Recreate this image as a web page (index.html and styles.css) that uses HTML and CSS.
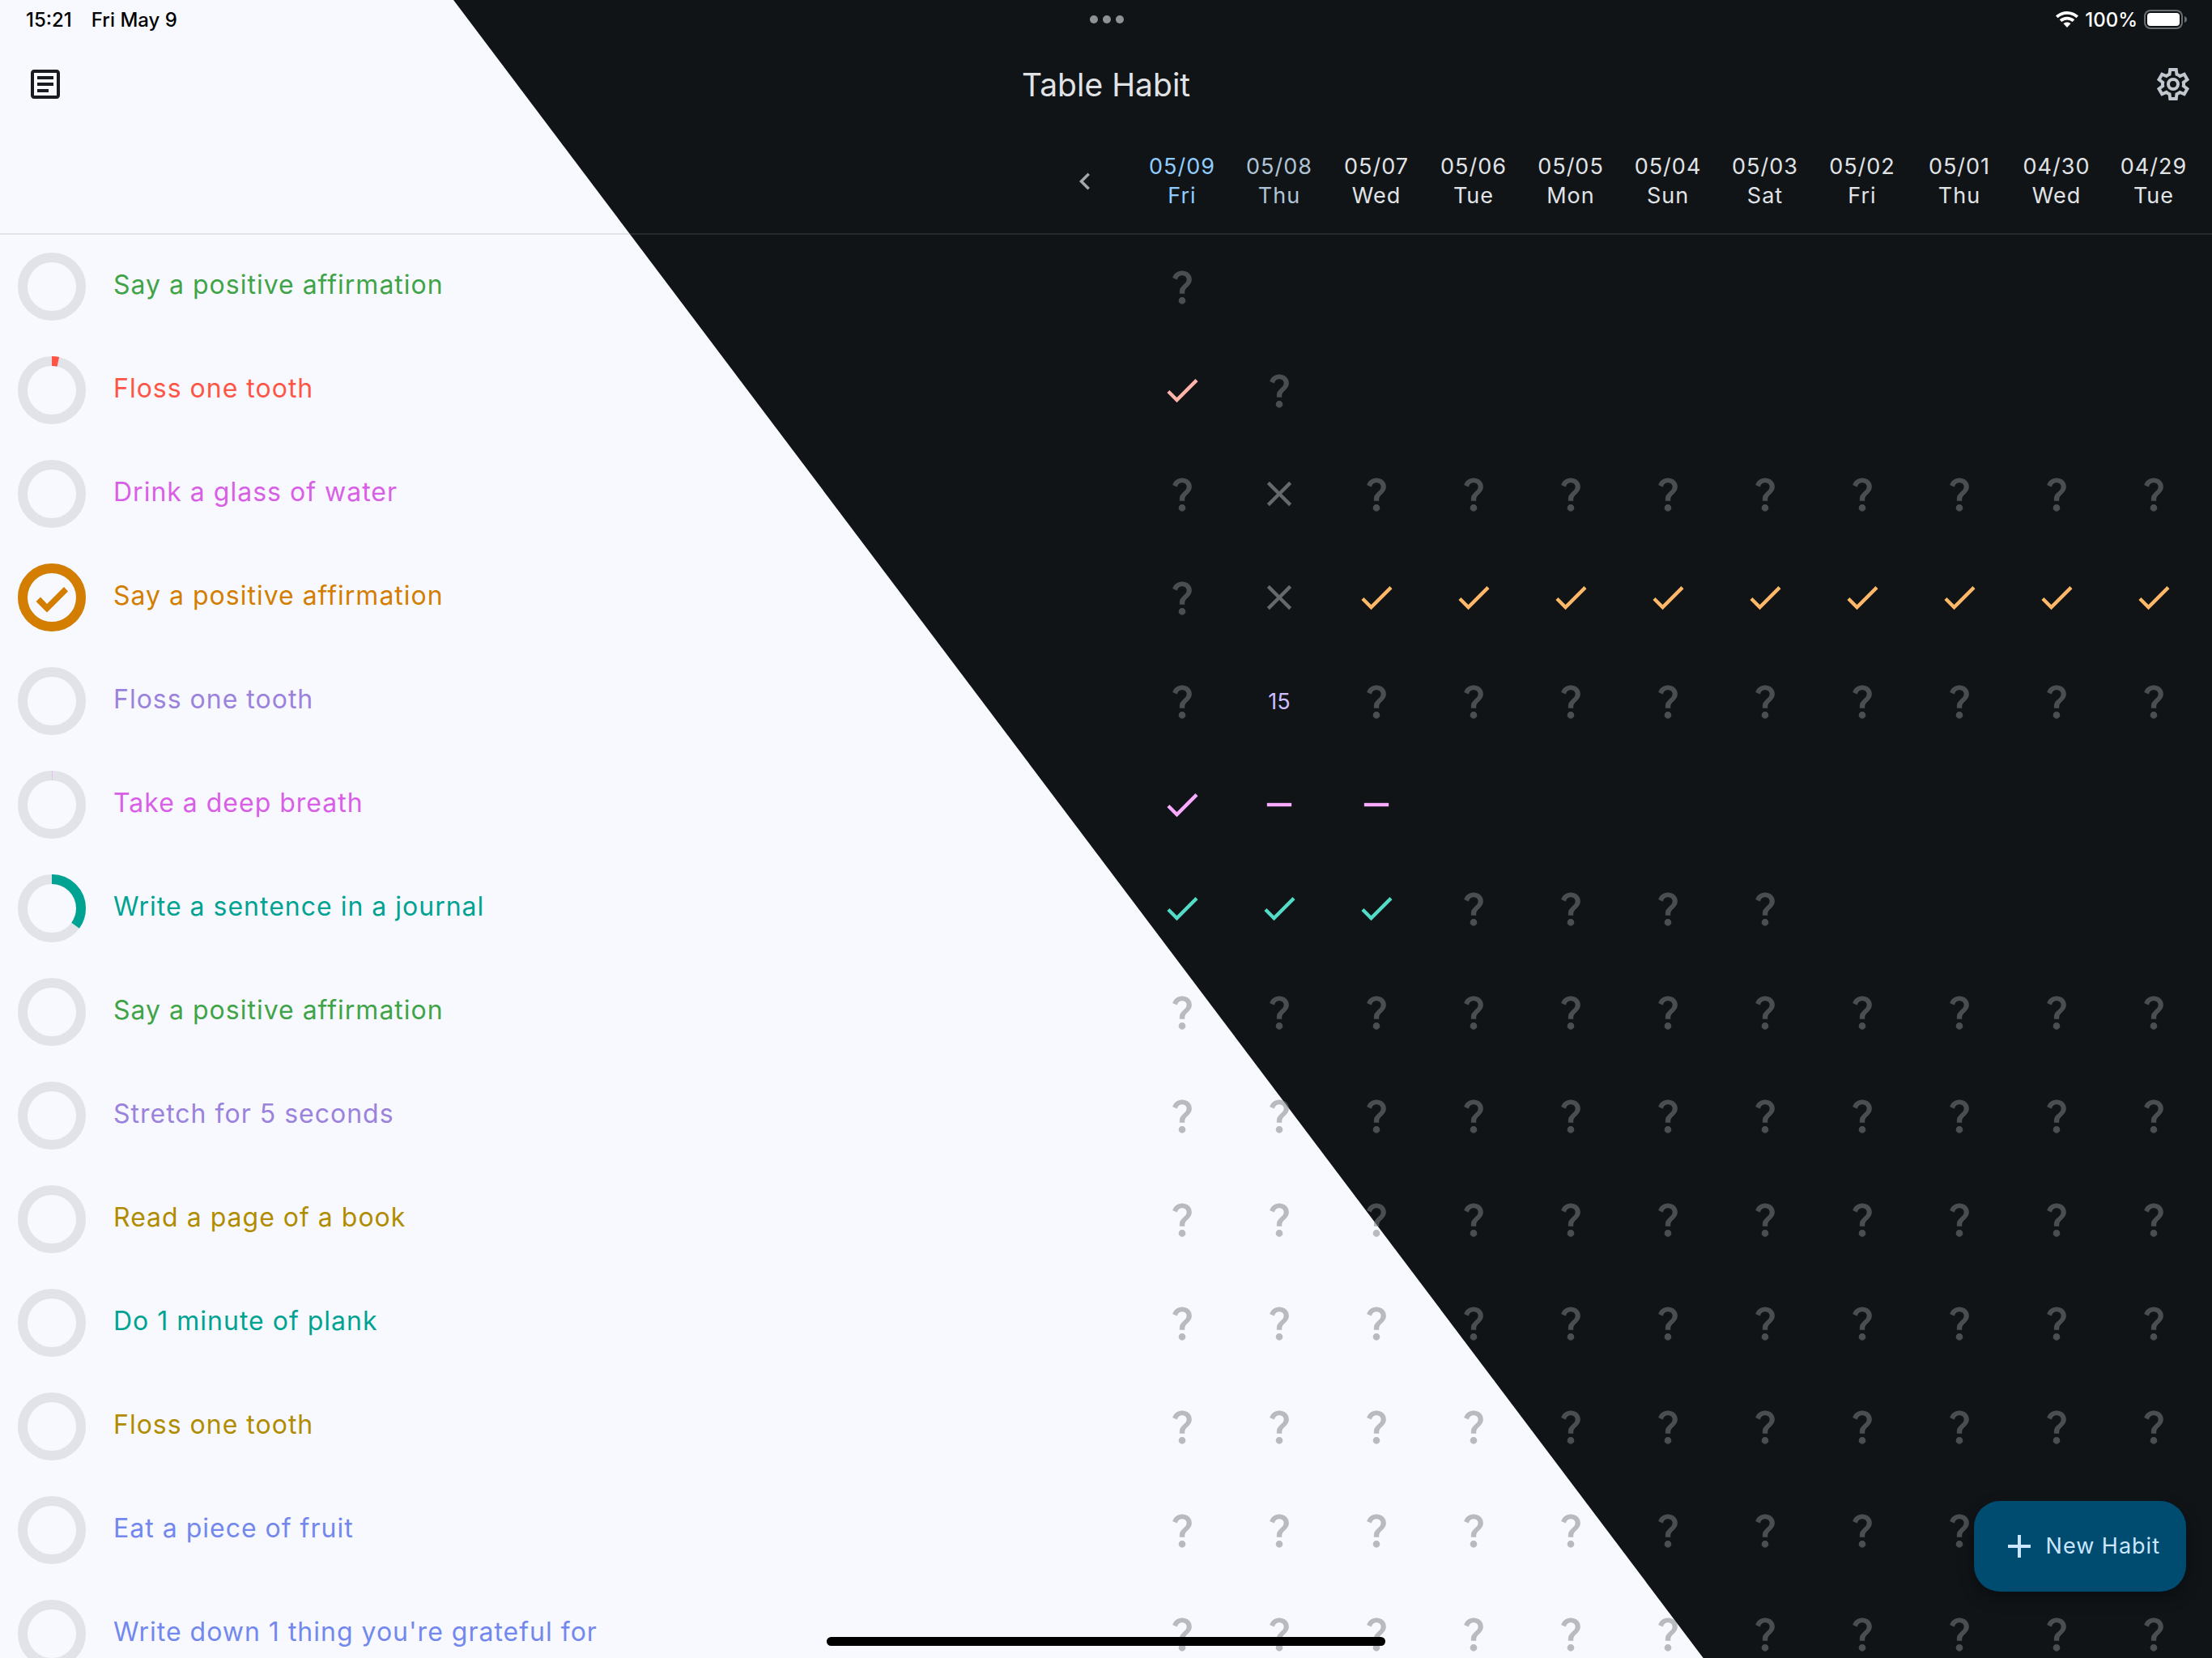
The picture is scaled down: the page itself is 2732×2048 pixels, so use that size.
FILE: index.html
```html
<!DOCTYPE html>
<html lang="en">
<head>
<meta charset="utf-8">
<meta name="viewport" content="width=device-width, initial-scale=1">
<title>Table Habit</title>
<link rel="stylesheet" href="styles.css">
</head>
<body>
<svg class="sprite" aria-hidden="true">
  <symbol id="ask" viewBox="0 0 24 24"><path d="M11.07 12.85c.77-1.39 2.25-2.21 3.11-3.44.91-1.29.4-3.7-2.18-3.7-1.69 0-2.52 1.28-2.87 2.34L6.54 6.96C7.25 4.83 9.18 3 11.99 3c2.35 0 3.96 1.07 4.78 2.41.7 1.15 1.11 3.3.03 4.9-1.2 1.77-2.35 2.31-2.97 3.45-.25.46-.35.76-.35 2.24h-2.89c-.01-.78-.13-2.05.48-3.15zM14 20c0 1.1-.9 2-2 2s-2-.9-2-2 .9-2 2-2 2 .9 2 2z"/></symbol>
  <symbol id="check" viewBox="0 0 24 24"><path d="M9 16.17 4.83 12l-1.42 1.41L9 19 21 7l-1.41-1.41z"/></symbol>
  <symbol id="cross" viewBox="0 0 24 24"><path d="M19 6.41 17.59 5 12 10.59 6.41 5 5 6.41 10.59 12 5 17.59 6.41 19 12 13.41 17.59 19 19 17.59 13.41 12z"/></symbol>
  <symbol id="dash" viewBox="0 0 24 24"><path d="M19 13H5v-2h14z"/></symbol>
</svg>

<div class="app">
  <div class="daylight"></div>

  <div class="status">
    <div class="status-left"><span>15:21</span><span>Fri May 9</span></div>
    <div class="dots"><i></i><i></i><i></i></div>
    <div class="status-right">
      <svg class="wifi" viewBox="0 0 28 20" aria-label="Wi-Fi"><path d="M14 0C8.6 0 3.7 2.1 0 5.5L2.6 8.2A16.6 16.6 0 0 1 25.4 8.2L28 5.5C24.3 2.1 19.4 0 14 0zM14 6.8C10.5 6.8 7.2 8.1 4.7 10.3L7.4 13A9.8 9.8 0 0 1 20.6 13L23.3 10.3C20.8 8.1 17.5 6.8 14 6.8zM14 13.4C12.2 13.4 10.6 14 9.4 15.1L14 20L18.6 15.1C17.4 14 15.8 13.4 14 13.4z"/></svg>
      <span>100%</span>
      <svg class="battery" viewBox="0 0 54 24" aria-label="Battery full"><rect class="shell" x="1" y="1" width="46" height="22" rx="7"/><rect x="4" y="4" width="40" height="16" rx="4"/><path class="nub" d="M50 8c2 .7 3 2.200 3 4s-1 3.300-3 4z"/></svg>
    </div>
  </div>

  <header class="bar">
    <button class="icon-button ink" type="button" aria-label="Habit notes"><svg viewBox="0 0 24 24"><path d="M19 5v14H5V5h14m0-2H5c-1.1 0-2 .9-2 2v14c0 1.1.9 2 2 2h14c1.1 0 2-.9 2-2V5c0-1.1-.9-2-2-2zM14 17H7v-2h7v2zm3-4H7v-2h10v2zm0-4H7V7h10v2z"/></svg></button>
    <h1>Table Habit</h1>
    <button class="icon-button settings" type="button" aria-label="Settings"><svg viewBox="0 -960 960 960"><path d="m370-80-16-128q-13-5-24.500-12T307-235l-119 50L78-375l103-78q-1-7-1-13.500v-27q0-6.500 1-13.500L78-585l110-190 119 50q11-8 23-15t24-12l16-128h220l16 128q13 5 24.500 12t22.500 15l119-50 110 190-103 78q1 7 1 13.500v27q0 6.500-2 13.500l103 78-110 190-118-50q-11 8-23 15t-24 12L590-80H370Zm70-80h79l14-106q31-8 57.500-23.500T639-327l99 41 39-68-86-65q5-14 7-29.500t2-31.500q0-16-2-31.500t-7-29.500l86-65-39-68-99 42q-22-23-48.500-38.500T533-694l-13-106h-79l-14 106q-31 8-57.500 23.500T321-633l-99-41-39 68 86 64q-5 15-7 30t-2 32q0 16 2 31t7 30l-86 65 39 68 99-42q22 23 48.500 38.500T427-266l13 106Z"/><circle class="hub" cx="480" cy="-480" r="120"/></svg></button>
  </header>

  <main class="scroller">
    <table class="habits">
      <colgroup><col class="col-name"><col class="col-day" span="10"><col class="col-last"></colgroup>
      <thead>
        <tr>
          <th><button class="icon-button small" type="button" aria-label="Newer days"><svg viewBox="0 0 24 24"><path d="M15.41 7.41 14 6l-6 6 6 6 1.41-1.41L10.83 12z"/></svg></button></th>
          <th scope="col" class="today">05/09<br>Fri</th>
          <th scope="col" class="yesterday">05/08<br>Thu</th>
          <th scope="col">05/07<br>Wed</th>
          <th scope="col">05/06<br>Tue</th>
          <th scope="col">05/05<br>Mon</th>
          <th scope="col">05/04<br>Sun</th>
          <th scope="col">05/03<br>Sat</th>
          <th scope="col">05/02<br>Fri</th>
          <th scope="col">05/01<br>Thu</th>
          <th scope="col">04/30<br>Wed</th>
          <th scope="col">04/29<br>Tue</th>
        </tr>
      </thead>
      <tbody id="rows"></tbody>
    </table>
  </main>

  <button class="fab" type="button"><svg viewBox="0 0 24 24" aria-hidden="true"><path d="M19 13h-6v6h-2v-6H5v-2h6V5h2v6h6z"/></svg>New Habit</button>
  <div class="home"></div>
</div>
<script src="habits.js"></script>
</body>
</html>
```

FILE: styles.css
```css
* { box-sizing: border-box; }

body {
  margin: 0;
  background: #101417;
  color: #e0e3e6;
  font-family: Inter, "Liberation Sans", sans-serif;
}

svg { display: block; fill: currentColor; }
.sprite { position: absolute; width: 0; height: 0; }

.app {
  position: relative;
  isolation: isolate;
  display: flex;
  flex-direction: column;
  height: 100vh;
  overflow: hidden;
}

/* light theme half, split along the diagonal */
.daylight {
  position: absolute;
  inset: 0;
  z-index: -1;
  background: #f8f9ff;
  clip-path: polygon(0 0, 20.5% 0, 77% 100%, 0 100%);
}

/* status bar */
.status {
  display: grid;
  grid-template-columns: 1fr auto 1fr;
  align-items: center;
  height: 48px;
  padding: 0 30px 0 32px;
  color: #fff;
  font-size: 24px;
  font-weight: 500;
}
.status-left { display: flex; gap: 24px; color: #000; }
.dots { display: flex; gap: 6px; }
.dots i { width: 10px; height: 10px; border-radius: 50%; background: #8f9295; }
.status-right { display: flex; justify-content: flex-end; align-items: center; gap: 8px; }
.wifi { width: 28px; height: 20px; }
.battery { width: 54px; height: 24px; }
.shell { fill: none; stroke: #6b6e70; stroke-width: 2; }
.nub { fill: #6b6e70; }

/* app bar */
.bar {
  display: grid;
  grid-template-columns: 1fr auto 1fr;
  align-items: center;
  height: 112px;
}
h1 { margin: 0; padding-top: 2px; font-size: 39px; line-height: 56px; font-weight: 400; }
.icon-button {
  display: grid;
  place-items: center;
  width: 96px;
  height: 80px;
  padding: 0;
  border: 0;
  background: none;
  color: #c1c7ce;
}
.icon-button svg { width: 48px; height: 48px; }
.settings { justify-self: end; }
.hub { fill: none; stroke: currentColor; stroke-width: 80; }
.ink { margin-left: 8px; color: #181c20; }
.small { width: 80px; color: #a5a7a9; }
.small svg { width: 42px; height: 42px; }

/* habit table */
.scroller { flex: 1; min-height: 0; overflow: auto; scrollbar-width: none; }
.habits { width: 100%; table-layout: fixed; border-spacing: 0; }
.col-day { width: 120px; }
.col-last { width: 132px; }
.habits th, .habits td { height: 128px; padding: 0; }
.habits th:last-child, .habits td:last-child { padding-right: 12px; }
.habits thead th {
  height: 130px;
  border-bottom: 2px solid rgb(131 137 140 / 19%);
  font-size: 27px;
  line-height: 36px;
  font-weight: 400;
  letter-spacing: 1px;
}
.habits thead .icon-button { margin: 0 20px 0 auto; }
.today { color: #90cdff; }
.yesterday { color: #b0c4d6; }

.habits tbody th { font-weight: 400; text-align: left; }
.habit { display: flex; align-items: center; gap: 34px; padding-left: 22px; }
.name {
  padding-bottom: 5px;
  font-size: 32px;
  line-height: 44px;
  letter-spacing: 1px;
}
.ring { width: 84px; height: 84px; fill: none; stroke-width: 12; }
.track { stroke: #e2e3e8; }
.progress { stroke: currentColor; }
.tick { fill: currentColor; }

.mark { width: 52px; height: 52px; margin: 0 auto; }
.ask { fill: rgb(126 131 135 / 53%); }
.cross { fill: #66696c; }
.count { font-size: 27px; text-align: center; }

.green { color: #3fa447; }
.red { color: #ff5545; }
.pink { color: #d860e6; }
.orange { color: #d37e00; }
.violet { color: #9b82dc; }
.teal { color: #00a392; }
.gold { color: #b18c00; }
.indigo { color: #7388ed; }
.red td { color: #ffb4a9; }
.pink td { color: #faabff; }
.orange td { color: #ffb868; }
.violet td { color: #cebdff; }
.teal td { color: #53dbc8; }

/* floating action button */
.fab {
  position: absolute;
  right: 32px;
  bottom: 82px;
  display: flex;
  align-items: center;
  gap: 9px;
  height: 112px;
  padding: 0 32px;
  border: 0;
  border-radius: 32px;
  background: #004b70;
  color: #cbe6ff;
  box-shadow: 0 8px 20px rgb(0 0 0 / 30%);
  font: 400 27px/40px Inter, "Liberation Sans", sans-serif;
  letter-spacing: 1px;
}
.fab svg { width: 48px; height: 48px; }

.home {
  position: absolute;
  bottom: 15px;
  left: 50%;
  width: 690px;
  height: 11px;
  margin-left: -345px;
  border-radius: 6px;
  background: #000;
}
```

FILE: habits.js
```js
// One letter per day, newest first: ? unanswered, v done, x missed, - skipped, n a count, space none
const habits = [
  { name: "Say a positive affirmation", color: "green", days: "?" },
  { name: "Floss one tooth", color: "red", progress: 0.035, days: "v?" },
  { name: "Drink a glass of water", color: "pink", days: "?x?????????" },
  { name: "Say a positive affirmation", color: "orange", progress: 1, days: "?xvvvvvvvvv" },
  { name: "Floss one tooth", color: "violet", days: "?n?????????", count: 15 },
  { name: "Take a deep breath", color: "pink", progress: 0.001, days: "v--" },
  { name: "Write a sentence in a journal", color: "teal", progress: 0.35, days: "vvv????" },
  { name: "Say a positive affirmation", color: "green", days: "???????????" },
  { name: "Stretch for 5 seconds", color: "violet", days: "???????????" },
  { name: "Read a page of a book", color: "gold", days: "???????????" },
  { name: "Do 1 minute of plank", color: "teal", days: "???????????" },
  { name: "Floss one tooth", color: "gold", days: "???????????" },
  { name: "Eat a piece of fruit", color: "indigo", days: "???????????" },
  { name: "Write down 1 thing you're grateful for", color: "indigo", days: "???????????" }
];

const marks = { "?": "ask", v: "check", x: "cross", "-": "dash" };

function cell(code, habit) {
  if (code === "n") return `<td class="count">${habit.count}</td>`;
  if (!marks[code]) return "<td></td>";
  return `<td><svg class="mark ${marks[code]}"><use href="#${marks[code]}"/></svg></td>`;
}

function ring(progress = 0) {
  const arc = progress
    ? `<circle class="progress" cx="42" cy="42" r="36" pathLength="1" stroke-dasharray="${progress} 1" transform="rotate(-90 42 42)"/>`
    : "";
  const tick = progress === 1
    ? `<path class="tick" d="M22.500 47L28 41.500L36 50L57 29L62 34.500L36 60.500z"/>`
    : "";
  return `<svg class="ring" viewBox="0 0 84 84"><circle class="track" cx="42" cy="42" r="36"/>${arc}${tick}</svg>`;
}

document.getElementById("rows").innerHTML = habits.map(habit => `
  <tr class="${habit.color}">
    <th scope="row"><div class="habit">${ring(habit.progress)}<span class="name">${habit.name}</span></div></th>
    ${[...habit.days.padEnd(11)].map(code => cell(code, habit)).join("")}
  </tr>`).join("");
```
